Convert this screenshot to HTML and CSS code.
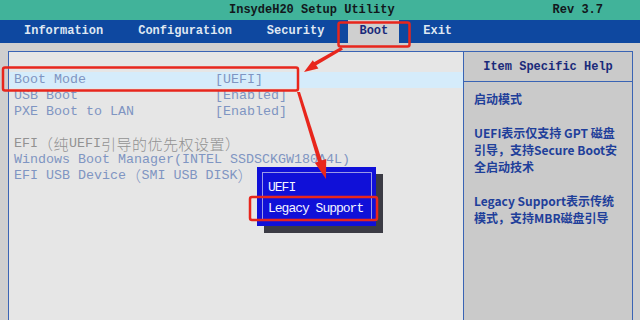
FILE: index.html
```html
<!DOCTYPE html>
<html lang="zh-CN">
<head>
    <meta charset="UTF-8">
    <link rel="stylesheet" href="styles.css">
</head>
<body>
<div class="titlebar">
    <span class="title">InsydeH20 Setup Utility</span>
    <span class="rev">Rev 3.7</span>
</div>
<nav class="menubar">
    <span class="tab">Information</span>
    <span class="tab">Configuration</span>
    <span class="tab">Security</span>
    <span class="tab active">Boot</span>
    <span class="tab">Exit</span>
</nav>
<div class="screen">
    <div class="frame">
        <div class="options">
            <div class="row selected"><span class="label">Boot Mode</span><span>[UEFI]</span></div>
            <div class="row"><span class="label">USB Boot</span><span>[Enabled]</span></div>
            <div class="row"><span class="label">PXE Boot to LAN</span><span>[Enabled]</span></div>
            <div class="row"></div>
            <div class="row heading">EFI<span class="cjk">（纯</span>UEFI<span class="cjk">引导的优先权设置）</span></div>
            <div class="row">Windows Boot Manager(INTEL SSDSCKGW180A4L)</div>
            <div class="row">EFI USB Device<span class="cjk">（</span>SMI USB DISK<span class="cjk">）</span></div>
        </div>
        <aside class="help">
            <div class="help-title">Item Specific Help</div>
            <div class="help-body">
                <p>启动模式</p>
                <p>UEFI表示仅支持 GPT 磁盘<br>引导，支持Secure Boot安<br>全启动技术</p>
                <p>Legacy Support表示传统<br>模式，支持MBR磁盘引导</p>
            </div>
        </aside>
    </div>
</div>

<!-- option popup for Boot Mode -->
<div class="popup">
    <div class="popup-inner">
        <div class="choice">UEFI</div>
        <div class="choice">Legacy Support</div>
    </div>
</div>

<!-- red markup drawn over the screenshot -->
<svg class="marks" width="640" height="320" viewBox="0 0 640 320">
    <g fill="none" stroke="#e8261c" stroke-width="2.5">
        <rect x="338.5" y="22.5" width="71" height="24" rx="2"/>
        <rect x="3" y="67.5" width="295" height="23" rx="2"/>
        <rect x="250" y="197" width="127" height="23" rx="2"/>
    </g>
    <g fill="#e8261c">
        <polygon points="341,47 343,49.5 315,66 313.5,62.5"/>
        <polygon points="304,72 318.4,68.5 312.8,60.2"/>
        <polygon points="297,92 300,92 322,161 318,162"/>
        <polygon points="326,179 326.2,159.1 314.8,162.7"/>
    </g>
</svg>
</body>
</html>
```

FILE: styles.css
```css
body {
    margin: 0;
    width: 640px;
    height: 320px;
    overflow: hidden;
    background-color: #cfcfcf;
    font-family: "Liberation Mono", "Noto Sans CJK SC", monospace;
    position: relative;
}

.titlebar {
    height: 20px;
    line-height: 20px;
    background-color: #41b39a;
    color: #12181c;
    font-size: 12px;
    font-weight: bold;
    display: flex;
}

.title {
    padding-left: 229px;
}

.rev {
    margin-left: auto;
    margin-right: 37px;
}

.menubar {
    height: 23px;
    line-height: 23px;
    background-color: #0e48a0;
    display: flex;
    gap: 13px;
    padding-left: 13px;
    font-size: 12px;
    font-weight: bold;
    color: #dfe7f2;
}

.tab {
    padding: 0 11px;
}

.tab.active {
    background-color: #cfcfcf;
    color: #1a2a7a;
}

.screen {
    height: 277px;
    padding: 8px 7px 0 8px;
    box-sizing: border-box;
}

.frame {
    height: 100%;
    border: 1px solid #3a64b4;
    border-bottom: none;
    display: grid;
    grid-template-columns: 454px 1fr;
}

.options {
    background-color: #e6e6e6;
    padding-top: 20px;
}

.row {
    height: 16px;
    line-height: 16px;
    padding-left: 5px;
    font-size: 13.33px;
    color: #7f95c2;
    white-space: nowrap;
    display: flex;
}

.row.selected {
    background-color: #d5ecfb;
    margin-left: 1px;
    padding-left: 4px;
}

.row.heading {
    color: #929292;
}

.label {
    width: 201px;
}

.cjk {
    font-family: "Noto Sans CJK SC", sans-serif;
    font-size: 15px;
    font-weight: 300;
    letter-spacing: 0.5px;
}

.help {
    background-color: #cacaca;
    border-left: 1px solid #3a64b4;
}

.help-title {
    height: 29px;
    line-height: 31px;
    border-bottom: 1px solid #3a64b4;
    text-align: center;
    font-size: 12px;
    font-weight: bold;
    color: #1a2a7a;
}

.help-body {
    padding: 8px 0 0 10px;
    font-family: "Noto Sans CJK SC", sans-serif;
    font-size: 12px;
    font-weight: bold;
    line-height: 17px;
    color: #1f3f9a;
    white-space: nowrap;
}

.help-body p {
    margin: 0 0 17px;
}

.popup {
    position: absolute;
    left: 257px;
    top: 167px;
    width: 119px;
    height: 59px;
    background-color: #1010d8;
    box-shadow: 7px 7px 0 #3b3b44;
}

.popup-inner {
    margin: 5px 4px 5px 5px;
    height: 49px;
    border: 1px solid #9a9ae6;
    padding: 4px 0 0 5px;
    box-sizing: border-box;
}

.choice {
    line-height: 21px;
    font-size: 13px;
    letter-spacing: -1px;
    color: #f4f4ff;
}

.marks {
    position: absolute;
    left: 0;
    top: 0;
}
```
